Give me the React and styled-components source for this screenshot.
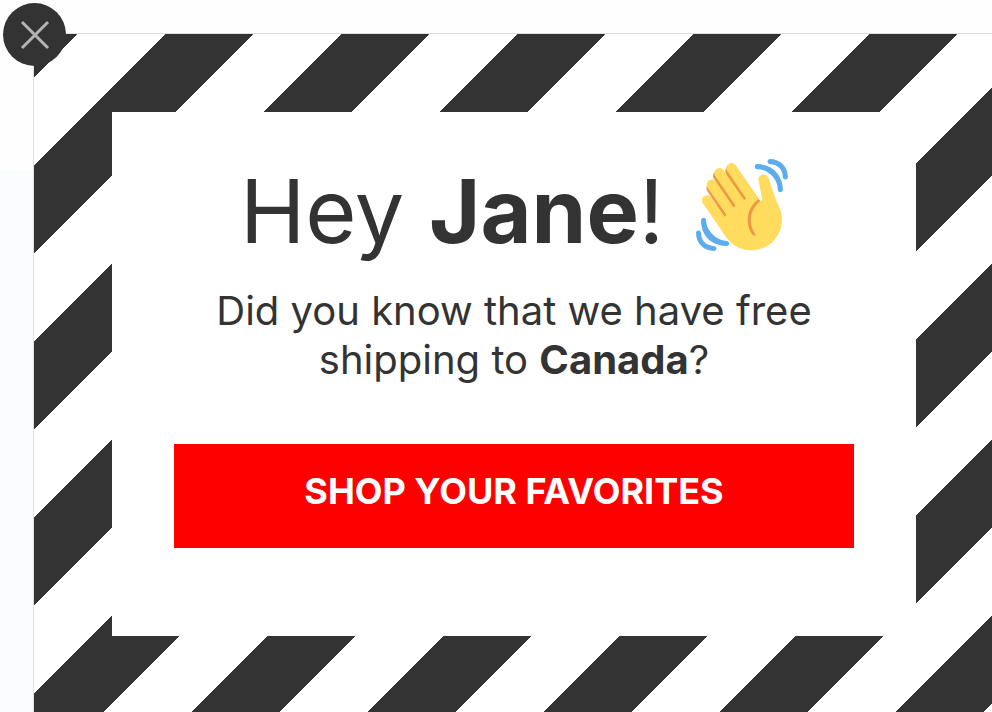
import React from "react";
import styled, { createGlobalStyle } from "styled-components";

const GlobalStyle = createGlobalStyle`
  *, *::before, *::after { box-sizing: border-box; }
  body {
    margin: 0;
    background: #fff;
    color: #333;
    font-family: "Inter", "Liberation Sans", sans-serif;
  }
`;

const Page = styled.div`
  display: flex;
  min-height: 100vh;
  padding: 34px 0 0 34px;
  background: linear-gradient(#fefefe 170px, #fafcff 170px);
`;

const Popup = styled.section`
  position: relative;
  display: flex;
  flex: 1;
  padding: 78px 76px 76px 78px;
  outline: 1px solid #dfe0e6;
  background: linear-gradient(135deg, #333 25%, #fff 25% 50%, #333 50% 75%, #fff 75%) -44px 0 / 176px 176px;
`;

const CloseButton = styled.button`
  position: absolute;
  top: -31px;
  left: -31px;
  display: grid;
  place-items: center;
  width: 63px;
  height: 63px;
  padding: 0;
  border: 0;
  border-radius: 50%;
  background: #333;
  color: #b4b4b4;
  cursor: pointer;
`;

const Message = styled.div`
  display: flex;
  flex: 1;
  flex-direction: column;
  padding: 44px 62px 88px;
  background: #fff;
  text-align: center;
`;

const Greeting = styled.h1`
  display: flex;
  align-items: center;
  justify-content: center;
  gap: 32px;
  margin: 0 0 20px;
  font-size: 88px;
  font-weight: 400;
  line-height: 110px;
`;

const Wave = styled.svg`
  flex: none;
  width: 92px;
  height: 92px;
  margin-bottom: 12px;
`;

const Question = styled.p`
  margin: 0 0 60px;
  font-size: 40px;
  line-height: 49px;
`;

const ShopButton = styled.button`
  padding: 23px 16px 33px;
  border: 0;
  background: #f00;
  color: #fff;
  font-family: inherit;
  font-size: 36px;
  font-weight: 700;
  line-height: 48px;
  text-transform: uppercase;
  cursor: pointer;
`;

function WavingHand() {
  return (
    <Wave viewBox="0 0 36 36" role="img" aria-label="Waving hand">
      <path fill="#EF9645" d="M4.861 9.147c.94-.657 2.357-.531 3.201.166l-.968-1.407c-.779-1.111-.5-2.313.612-3.093 1.112-.777 4.263 1.312 4.263 1.312-.786-1.122-.639-2.544.483-3.331 1.122-.784 2.67-.513 3.456.611l10.42 14.72L25 31l-11.083-4.042L4.625 12.793c-.793-1.129-.559-2.853.236-3.646z" />
      <path fill="#FFDC5D" d="M2.695 17.336s-1.132-1.65.519-2.781c1.649-1.131 2.78.518 2.78.518l5.251 7.658c.181-.302.379-.6.6-.894L4.557 11.21s-1.131-1.649.519-2.78c1.649-1.131 2.78.518 2.78.518l6.855 9.997c.255-.208.516-.417.785-.622L7.549 6.732s-1.131-1.649.519-2.78c1.649-1.131 2.78.518 2.78.518l7.947 11.589c.292-.179.581-.334.871-.498L12.238 4.729s-1.131-1.649.518-2.78c1.649-1.131 2.78.518 2.78.518l7.854 11.453 1.194 1.742c-4.948 3.394-5.419 9.779-2.592 13.902.565.825 1.39.26 1.39.26-3.393-4.949-2.357-10.51 2.592-13.903L24.515 8.62s-.545-1.924 1.378-2.47c1.924-.545 2.47 1.379 2.47 1.379l1.685 5.004c.668 1.984 1.379 3.961 2.32 5.831 2.657 5.28 1.07 11.842-3.94 15.279-5.465 3.747-12.936 2.354-16.684-3.11L2.695 17.336z" />
      <path fill="#5DADEC" d="M12 32.042C8 32.042 3.958 28 3.958 24c0-.553-.405-1-.958-1s-1.042.447-1.042 1C1.958 30 6 34.042 12 34.042c.553 0 1-.489 1-1.042s-.447-.958-1-.958z M7 34c-3 0-5-2-5-5 0-.553-.447-1-1-1s-1 .447-1 1c0 4 3 7 7 7 .553 0 1-.447 1-1s-.447-1-1-1zM24 2c-.552 0-1 .448-1 1s.448 1 1 1c4 0 8 3.589 8 8 0 .552.448 1 1 1s1-.448 1-1c0-5.514-4-10-10-10z M29 .042c-.552 0-1 .406-1 .958s.448 1.042 1 1.042c3 0 4.958 2.225 4.958 4.958 0 .552.489 1 1.042 1s.958-.448.958-1C35.958 3.163 33 .042 29 .042z" />
    </Wave>
  );
}

export default function App() {
  return (
    <>
      <GlobalStyle />
      <Page>
        <Popup aria-labelledby="greeting">
          <Message>
            <Greeting id="greeting">
              <span>Hey <strong>Jane</strong>!</span>
              <WavingHand />
            </Greeting>
            <Question>
              Did you know that we have free shipping to <strong>Canada</strong>?
            </Question>
            <ShopButton type="button">Shop your favorites</ShopButton>
          </Message>
          <CloseButton type="button" aria-label="Close">
            <svg width="30" height="30" viewBox="0 0 30 30" fill="none" stroke="currentColor" strokeWidth="3">
              <path d="M2 2 28 28M28 2 2 28" />
            </svg>
          </CloseButton>
        </Popup>
      </Page>
    </>
  );
}
